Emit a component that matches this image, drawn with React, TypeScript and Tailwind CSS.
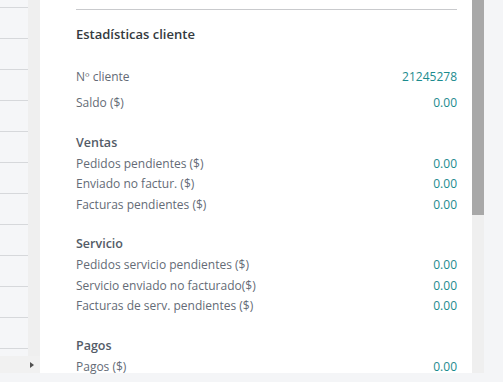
type Row = { label: string; value: string };

const groups: { title: string; rows: Row[] }[] = [
  {
    title: "Ventas",
    rows: [
      { label: "Pedidos pendientes ($)", value: "0.00" },
      { label: "Enviado no factur. ($)", value: "0.00" },
      { label: "Facturas pendientes ($)", value: "0.00" },
    ],
  },
  {
    title: "Servicio",
    rows: [
      { label: "Pedidos servicio pendientes ($)", value: "0.00" },
      { label: "Servicio enviado no facturado($)", value: "0.00" },
      { label: "Facturas de serv. pendientes ($)", value: "0.00" },
    ],
  },
  {
    title: "Pagos",
    rows: [{ label: "Pagos ($)", value: "0.00" }],
  },
];

export default function App() {
  return (
    <div className="flex h-[382px] w-full flex-col overflow-hidden bg-[#f4f5f7] font-['Open_Sans',sans-serif]">
      <div className="flex h-[373px]">
        {/* left list + scrollbars */}
        <div className="flex w-[40px] flex-col">
          <div className="flex min-h-0 flex-1">
            <div className="flex w-[28px] flex-col overflow-hidden bg-[#f5f6f8]">
              <div className="h-[8px] shrink-0 border-b border-[#d6d8db]" />
              {Array.from({ length: 11 }).map((_, i) => (
                <div key={i} className="h-[31px] shrink-0 border-b border-[#d6d8db]" />
              ))}
            </div>
            <div className="w-[12px] bg-[#efefef]" />
          </div>
          <div className="flex h-[17px] items-center justify-end bg-[#f1f1f1] pr-[6px]">
            <div className="h-0 w-0 border-y-[3.5px] border-l-[4px] border-y-transparent border-l-[#505050]" />
          </div>
        </div>

        {/* stats panel */}
        <div className="w-[432px] bg-white pl-[36px] pr-[15px]">
          <div className="mt-[9px] border-t border-[#c9cacd]" />
          <h2 className="mt-[13px] text-[13px] leading-[22px] font-semibold text-[#343a40]">
            Estadísticas cliente
          </h2>

          <div className="mt-[18.5px] text-[12px] leading-[26px]">
            <div className="flex justify-between">
              <span className="text-[#646b76]">Nº cliente</span>
              <span className="text-[#1b8b8e]">21245278</span>
            </div>
            <div className="flex justify-between">
              <span className="text-[#646b76]">Saldo ($)</span>
              <span className="text-[#1b8b8e]">0.00</span>
            </div>
          </div>

          {groups.map((g, gi) => (
            <div
              key={g.title}
              className={`${gi === 0 ? "mt-[17.5px]" : gi === 1 ? "mt-[18.5px]" : "mt-[19px]"} text-[12px] leading-[20.7px]`}
            >
              <div className="text-[12.5px] font-semibold text-[#535b67]">{g.title}</div>
              {g.rows.map((r) => (
                <div key={r.label} className="flex justify-between">
                  <span className="text-[#646b76]">{r.label}</span>
                  <span className="text-[#1b8b8e]">{r.value}</span>
                </div>
              ))}
            </div>
          ))}
        </div>

        {/* panel scrollbar */}
        <div className="flex w-[12px] flex-col bg-[#efefef]">
          <div className="h-[215px] bg-[#a8a8a8]" />
        </div>
      </div>
    </div>
  );
}
